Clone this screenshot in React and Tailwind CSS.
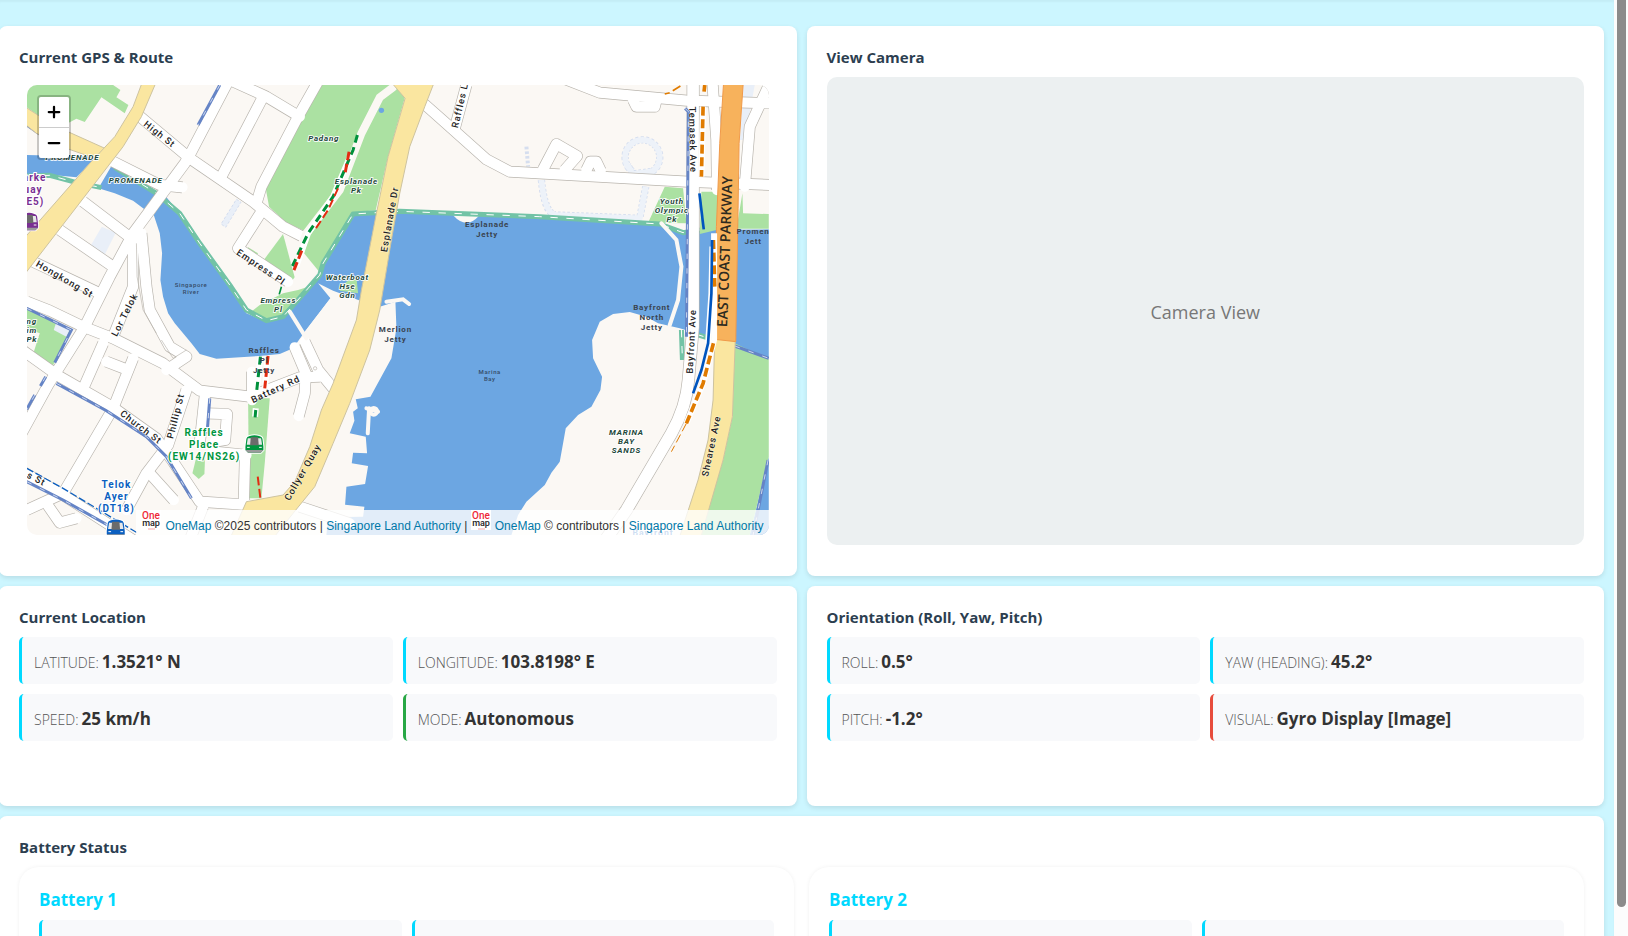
import { LuMinus, LuPlus } from 'react-icons/lu'

// Map drawing: three units to a pixel
const water = [
  'M81 465 L290 470 L230 532 L160 525 L81 528Z',
  'M335 498 L296 565 L345 580 L400 602 L437 630 L468 582 L400 540Z',
  'M497 588 L462 645 L480 700 L487 760 L482 840 L490 890 L505 940 L525 970 L575 1030 L600 1062 L650 1076 L780 1068 L840 1062 L880 1045 L915 995 L992 895 L955 850 L1000 872 L1090 905 L1140 920 L1187 905 L1190 985 L1175 1075 L1112 1190 L1068 1198 L1074 1225 L1060 1235 L1064 1262 L1050 1300 L1098 1310 L1102 1360 L1060 1358 L1056 1390 L1105 1398 L1096 1452 L1040 1460 L1036 1514 L1094 1520 L1090 1550 L985 1552 L980 1605 L1535 1605 L1555 1545 L1580 1505 L1635 1455 L1655 1418 L1680 1385 L1690 1330 L1698 1285 L1735 1245 L1775 1220 L1802 1170 L1807 1130 L1780 1075 L1777 1020 L1800 965 L1840 942 L1890 936 L1940 950 L1975 970 L2040 985 L2140 1015 L2307 1075 L2307 688 L2100 690 L2050 698 L1980 672 L1620 650 L1200 632 L1060 640 L970 790 L930 860 L880 920 L850 955 L800 965 L740 940 L700 880 L600 730 L540 640Z',
  'M2307 1370 L2307 1605 L2250 1605Z',
]

const greens = [
  'M81 255 L340 255 L362 270 L350 292 L386 315 L375 340 L305 292 L255 366 L230 356 L200 372 L178 390 L81 322Z',
  'M968 255 L1178 255 L1216 290 L1165 470 L1128 630 L1060 638 L970 790 L930 860 L880 915 L850 950 L800 962 L750 938 L780 915 L850 880 L895 870 L895 820 L930 700 L860 668 L808 620 L797 560 L820 500 L900 360Z',
  'M850 702 L792 780 L870 850 L895 820Z',
  'M745 742 L775 760 L768 768 L738 752Z',
  'M1040 845 L1070 830 L1075 880 L1020 872Z',
  'M81 925 L212 990 L160 1096 L100 1062 L120 1000 L81 985Z',
  'M745 1195 L810 1195 L795 1390 L785 1495 L748 1495Z',
  'M590 1370 L616 1370 L614 1422 L597 1437 L578 1420Z',
  'M1995 560 L2050 565 L2060 670 L1945 668Z',
  'M2105 575 L2160 575 L2150 690 L2100 702Z',
  'M2228 580 L2230 640 L2307 642 L2307 686 L2210 686Z',
  'M2205 1030 L2307 1078 L2307 1370 L2250 1605 L2100 1605 L2170 1380 L2198 1250Z',
]

const land = [
  'M895 870 L850 702 L905 750 L962 820 L925 860Z',
  'M1360 646 L1437 648 Q1400 690 1360 646Z',
  'M992 895 L1045 900 L1090 905 L1000 1150 L915 995Z',
]

const blockLines = [
  'M690 235 L575 455 L555 490 L400 700 L330 830 L255 980 L145 1155 L60 1310',
  'M415 345 L570 475 L760 605 L850 680 L905 708',
  'M785 300 L665 530',
  'M690 240 L800 290 L900 350',
  'M960 235 L895 350 L785 560 L770 610',
  'M785 635 L715 745 L865 845',
  'M340 485 L480 555 L548 562',
  'M250 605 L395 715',
  'M180 690 L340 800',
  'M81 775 L110 790 L300 880',
  'M81 905 L150 932 L250 980 L340 1015 L490 1090 L600 1172 L750 1190 L900 1132 L960 1130',
  'M400 710 L400 860 L340 1010',
  'M425 700 L440 860 L450 930 L510 1040 L560 1070 L500 1110',
  'M60 1045 L180 1130 L340 1222 L470 1315 L520 1385 L600 1505 L750 1515',
  'M310 1030 L255 1155',
  'M320 1085 L385 1110',
  'M400 1075 L340 1225 L190 1480 L81 1530',
  'M560 1170 L505 1335 L440 1420 L380 1530',
  'M60 1410 L190 1485 L400 1620',
  'M615 1190 L600 1330',
  'M620 1240 L682 1242 L676 1320 L645 1325',
  'M757 1115 L757 1200',
  'M736 1360 L732 1510',
  'M640 1355 L740 1365',
  'M450 1420 L522 1500',
  'M140 1510 L180 1568 L230 1555',
  'M915 1025 L955 1110 L1000 1165',
  'M885 1042 L918 1120 L915 1180 L897 1248',
  'M610 1520 L570 1620',
  'M900 1520 L1050 1570',
  'M1260 300 L1350 380 L1460 478 L1530 515 L2060 545 L2320 555',
  'M1400 255 L1365 385',
  'M1690 235 L1800 278 L2060 302 L2320 310',
  'M1900 300 L1910 320 L1965 320 L1970 300',
  'M1630 508 L1670 432 L1732 468 L1695 510',
  'M1760 510 L1772 485 L1790 485 L1803 512',
  'M2138 245 L2150 420 L2152 570',
  'M2310 250 L2250 380 L2235 560',
]

const smallRoads = [
  'M870 935 L920 1015',
  'M1985 670 L2030 720 L2045 800 L2035 900 L2010 975',
  'M1160 905 L1210 898 L1228 912',
  'M1100 1225 L1135 1235',
  'M1108 1225 L1104 1300',
]

const walks = [
  'M345 502 L470 580 L540 640 L600 730 L690 855 L740 930 L800 962 L850 950 L890 905 L960 825 L970 790 L1060 642 L1200 634 L1620 650 L1980 672 L2050 698 L2100 690',
  'M81 528 L150 526 L220 545 L305 563',
  'M2045 990 L2048 1080',
  'M2090 1003 L2205 1038',
]

const bluePaths = [
  'M81 375 L120 402',
  'M660 255 L595 375',
  'M81 925 L215 990 L165 1088',
  'M170 1150 L320 1232 L440 1310 L500 1370 L575 1495',
  'M105 1185 L81 1228',
  'M138 1130 L122 1158',
  'M81 1445 L190 1500 L350 1590',
  'M630 1195 L622 1300',
  'M2056 325 L2066 335 L2064 560 L2060 1010',
  'M2205 1038 L2307 1075',
  'M2305 1380 L2260 1605',
]

const stations = [
  { x: 764, y: 1330, color: '#00963f' },
  { x: 348, y: 1583, color: '#0b5fc0' },
  { x: 88, y: 663, color: '#7a2f92' },
]

const streets = [
  { text: 'High St', x: 480, y: 402, angle: 38 },
  { text: 'Empress Pl', x: 784, y: 801, angle: 34 },
  { text: 'Hongkong St', x: 195, y: 837, angle: 30 },
  { text: 'Lor Telok', x: 374, y: 944, angle: -63 },
  { text: 'Battery Rd', x: 827, y: 1167, angle: -25 },
  { text: 'Phillip St', x: 527, y: 1248, angle: -76 },
  { text: 'Church St', x: 424, y: 1281, angle: 37 },
  { text: 's St', x: 110, y: 1436, angle: 27 },
  { text: 'Collyer Quay', x: 908, y: 1416, angle: -60 },
  { text: 'Esplanade Dr', x: 1169, y: 658, angle: -80 },
  { text: 'Raffles Li', x: 1381, y: 312, angle: -77 },
  { text: 'Temasek Ave', x: 2080, y: 419, angle: 89 },
  { text: 'Bayfront Ave', x: 2074, y: 1024, angle: -87 },
  { text: 'Sheares Ave', x: 2134, y: 1338, angle: -78 },
]

const places = [
  { lines: ['PROMENADE'], x: 218, y: 479 },
  { lines: ['PROMENADE'], x: 408, y: 549 },
  { lines: ['Padang'], x: 972, y: 424 },
  { lines: ['Esplanade', 'Pk'], x: 1070, y: 552 },
  { lines: ['Waterboat', 'Hse', 'Gdn'], x: 1043, y: 840 },
  { lines: ['Empress', 'Pl'], x: 836, y: 910 },
  { lines: ['ng', 'im', 'Pk'], x: 96, y: 973 },
  { lines: ['Youth', 'Olympic', 'Pk'], x: 2016, y: 613 },
  { lines: ['MARINA', 'BAY', 'SANDS'], x: 1880, y: 1306 },
]

const jetties = [
  { lines: ['Esplanade', 'Jetty'], x: 1462, y: 680 },
  { lines: ['Bayfront', 'North', 'Jetty'], x: 1956, y: 930 },
  { lines: ['Merlion', 'Jetty'], x: 1187, y: 995 },
  { lines: ['Raffles', 'Pl', 'Jetty'], x: 793, y: 1060 },
  { lines: ['Promen', 'Jett'], x: 2260, y: 702 },
]

const stationNames = [
  { lines: ['Raffles', 'Place', '(EW14/NS26)'], x: 613, y: 1308, color: '#00963f' },
  { lines: ['Telok', 'Ayer', '(DT18)'], x: 350, y: 1463, color: '#0b5fc0' },
  { lines: ['Clarke', 'Quay', '(NE5)'], x: 88, y: 544, color: '#7a2f92' },
]

const MapLabel = ({ lines, x, y, step, color }) => (
  <text textAnchor="middle" fill={color}>
    {lines.map((line, i) => (
      <tspan key={line} x={x} y={y + i * step}>
        {line}
      </tspan>
    ))}
  </text>
)

const Train = ({ x, y, color }) => (
  <g transform={`translate(${x} ${y})`}>
    <path
      d="M-27 10 L-24 -14 Q-23 -20 -14 -22 Q0 -27 14 -22 Q23 -20 24 -14 L27 10 V20 L19 28 H-19 L-27 20Z"
      fill={color}
      stroke="#fff"
      strokeWidth="6"
      paintOrder="stroke"
    />
    <path d="M-23 4 L-20 -15 H20 L23 4Z" fill="#e8e8e8" />
    <path d="M-13 6 L-11 -18 H11 L13 6Z" fill="#6b6b6b" />
    <path d="M-22 12 H-14 M14 12 H22" stroke="#fff" strokeWidth="3" />
    <path d="M-27 20 H27 L19 28 H-19Z" fill="#9a9a9a" />
  </g>
)

const RouteMap = () => (
  <svg
    viewBox="81 255 2226 1350"
    preserveAspectRatio="xMidYMid slice"
    className="block h-full w-full font-['Roboto',sans-serif]"
    role="img"
    aria-label="Map of Marina Bay"
  >
    <rect x="0" y="200" width="2400" height="1450" fill="#fbf8f4" />
    <g fill="#6ca6e2">
      {water.map((d) => <path key={d} d={d} />)}
    </g>
    <g fill="#abe1a2">
      {greens.map((d) => <path key={d} d={d} />)}
    </g>
    <g fill="#fbf8f4">
      {land.map((d) => <path key={d} d={d} />)}
    </g>

    <g fill="#e9eff8">
      <path d="M306 680 L348 698 L314 766 L270 742Z" />
      <path d="M710 598 L724 606 L678 682 L664 672Z" strokeDasharray="8 6" stroke="#d5deef" strokeWidth="3" />
      <path d="M170 965 L212 985 L200 1010 L162 990Z" />
      <path d="M2230 255 H2265 L2235 420 H2220Z" />
    </g>
    <g fill="none" stroke="#d5deef" strokeWidth="22" strokeDasharray="8 6">
      <path d="M1898 514 A52 52 0 1 1 1958 514 L1898 522 L1884 495" />
      <path d="M1625 540 Q1635 645 1670 645 L1920 655 L1938 560" />
      <path d="M1580 440 L1585 500" strokeWidth="12" />
    </g>
    <g fill="none" stroke="#edf2f9" strokeWidth="17">
      <path d="M1898 514 A52 52 0 1 1 1958 514 L1898 522 L1884 495" />
      <path d="M1625 540 Q1635 645 1670 645 L1920 655 L1938 560" />
    </g>

    <g fill="none" stroke="#72c3a6" strokeWidth="15" strokeLinejoin="round">
      {walks.map((d) => <path key={d} d={d} />)}
    </g>
    <g fill="none" stroke="#fff" strokeWidth="3" strokeDasharray="22 26">
      {walks.map((d) => <path key={d} d={d} />)}
    </g>

    <g fill="none" stroke="#b9b5ae" strokeWidth="35" strokeLinejoin="round">
      {blockLines.map((d) => <path key={d} d={d} />)}
      <path d="M2080 240 V980 L2066 1140 Q2060 1220 2015 1300 L1880 1530 L1810 1630" strokeWidth="39" />
    </g>
    <g fill="none" stroke="#fff" strokeWidth="31" strokeLinejoin="round" strokeLinecap="round">
      {blockLines.map((d) => <path key={d} d={d} />)}
      <path d="M2080 240 V980 L2066 1140 Q2060 1220 2015 1300 L1880 1530 L1810 1630" strokeWidth="35" />
    </g>
    <g fill="none" stroke="#fbf8f4" strokeWidth="12" strokeLinecap="round">
      {smallRoads.map((d) => <path key={d} d={d} />)}
      <circle cx="1122" cy="1234" r="10" />
      <path d="M1180 262 L1140 292 L1085 400 L1020 570 L920 700 L885 790" strokeWidth="24" />
    </g>
    <g fill="none" stroke="#b9b5ae" strokeWidth="2">
      <path d="M410 730 L412 830 L430 930 L470 1000" />
      <path d="M485 1020 L520 1075 L560 1050" />
      <circle cx="946" cy="1105" r="5" />
    </g>
    <circle cx="1145" cy="331" r="8" fill="#6ca6e2" />

    <g fill="none" stroke="#6584c6" strokeWidth="9">
      {bluePaths.map((d) => <path key={d} d={d} />)}
    </g>
    <g fill="none" stroke="#fff" strokeWidth="2" strokeDasharray="16 28">
      {bluePaths.map((d) => <path key={d} d={d} />)}
    </g>
    <path d="M81 1405 L190 1465 L415 1600" fill="none" stroke="#0b5fc0" strokeWidth="4" strokeDasharray="22 8" />

    <g fill="#fae6a0" stroke="#cdc3a0" strokeWidth="3">
      <path d="M60 310 L160 375 L320 447 L300 480 L200 445 L110 400 L60 360Z" />
      <path d="M430 240 L472 240 L425 350 L370 440 L60 842 L60 730 L270 490 L345 410 L400 320Z" />
      <path d="M1160 230 L1216 295 L1165 470 L1130 640 L1085 870 L1070 960 L1000 1150 L965 1230 L930 1340 L885 1445 L850 1485 L740 1505 L680 1640 L800 1640 L880 1540 L945 1460 L1000 1330 L1050 1210 L1110 1050 L1140 930 L1175 720 L1200 580 L1230 440 L1275 320 L1310 230Z" />
      <path d="M2145 1010 L2140 1200 L2125 1320 L2095 1440 L2030 1640 L2095 1640 L2170 1380 L2198 1250 L2207 1010Z" />
    </g>
    <path
      d="M2172 240 L2231 240 L2218 430 L2215 625 L2208 1025 L2145 1018 L2150 680 L2160 430Z"
      fill="#f7b25c"
      stroke="#f09a4a"
      strokeWidth="3"
    />

    <g fill="none" strokeWidth="11">
      <g stroke="#fff" strokeWidth="18">
        <path d="M2110 320 L2105 530" />
        <path d="M2143 700 L2143 1020 L2110 1150 L2060 1270" />
        <path d="M2138 740 L2135 880 L2125 1030" />
        <path d="M1055 460 L1000 590 L925 700 L890 798" />
        <path d="M782 1070 L770 1180" />
        <path d="M803 1070 L796 1165" />
        <path d="M768 1225 L766 1250" />
      </g>
      <g stroke="#e07b00" strokeDasharray="27 11">
        <path d="M2110 320 L2105 530" />
        <path d="M2115 255 L2113 275" />
        <path d="M2141 720 L2145 860" />
        <path d="M2141 1030 L2110 1150 L2060 1270" />
        <path d="M2060 1270 L2015 1355" strokeWidth="3" />
        <path d="M2042 258 L2010 278 L1995 282" strokeWidth="5" />
      </g>
      <g stroke="#0055bf" strokeWidth="8">
        <path d="M2099 580 L2112 688" />
        <path d="M2137 720 L2135 880 L2125 1030 L2105 1110 L2080 1180" />
      </g>
      <g stroke="#00913c" strokeWidth="9" strokeDasharray="24 14">
        <path d="M1073 405 L1060 450 L1000 590 L925 700 L878 798" />
        <path d="M782 1070 L770 1180" />
        <path d="M768 1230 L766 1252" />
        <path d="M845 860 L835 895" strokeWidth="5" />
      </g>
      <g stroke="#e22c12" strokeWidth="9" strokeDasharray="26 11">
        <path d="M1048 455 L1036 520" />
        <path d="M1015 565 L985 630 L945 690" strokeWidth="6" />
        <path d="M906 752 L882 812" />
        <path d="M805 1068 L795 1165" />
        <path d="M774 1430 L782 1495" strokeWidth="6" />
      </g>
    </g>

    {stations.map((s) => <Train key={s.color} {...s} />)}

    <g className="font-medium tracking-widest" fontSize="28" fill="#222" stroke="#fff" strokeOpacity="0.5" strokeWidth="4" paintOrder="stroke">
      {streets.map((s) => (
        <text key={s.text} textAnchor="middle" transform={`translate(${s.x} ${s.y}) rotate(${s.angle})`} dy="10">
          {s.text}
        </text>
      ))}
    </g>
    <text
      className="font-['Open_Sans',sans-serif] font-semibold"
      textAnchor="middle"
      fontSize="42"
      fill="#2d2a20"
      transform="translate(2190 755) rotate(-88)"
    >
      EAST COAST PARKWAY
    </text>
    <g className="font-bold italic tracking-widest" fontSize="24" fill="#22483a" stroke="#fff" strokeWidth="5" paintOrder="stroke">
      {places.map((p, i) => <MapLabel key={i} step={27} {...p} />)}
    </g>
    <g className="font-bold tracking-widest" fontSize="24" fill="#3a4450">
      {jetties.map((p, i) => <MapLabel key={i} step={30} {...p} />)}
    </g>
    <g className="font-medium tracking-widest" fontSize="18" fill="#344a66">
      <MapLabel lines={['Singapore', 'River']} x={574} y={862} step={21} />
      <MapLabel lines={['Marina', 'Bay']} x={1470} y={1123} step={21} />
    </g>
    <g className="font-bold tracking-widest" fontSize="30" stroke="#fff" strokeWidth="6" paintOrder="stroke">
      {stationNames.map((s, i) => <MapLabel key={i} step={36} {...s} />)}
      <text x="1898" y="1608" fontSize="26" fill="#0b5fc0">Bayfront</text>
    </g>
  </svg>
)

const OneMapLogo = () => (
  <svg viewBox="0 0 20 20" className="mr-1 inline-block size-5 bg-white align-baseline font-['Roboto',sans-serif]" aria-hidden="true">
    <text x="10" y="9" textAnchor="middle" fontSize="10" fontWeight="500" fill="#ee2737">One</text>
    <text x="10" y="16" textAnchor="middle" fontSize="9" fontWeight="500" fill="#222">map</text>
    <path d="M7 19 H14" stroke="#f3a6a6" strokeWidth="1" />
  </svg>
)

const Attribution = () => (
  <div className="absolute right-0 bottom-0 h-[25px] bg-white/80 px-[5px] font-['Liberation_Sans',Arial,sans-serif] text-xs leading-5 whitespace-nowrap text-[#333]">
    <OneMapLogo />
    <a href="#onemap" className="text-[#0078a8]">OneMap</a> ©2025 contributors |{' '}
    <a href="#sla" className="text-[#0078a8]">Singapore Land Authority</a> |{' '}
    <OneMapLogo />
    <a href="#onemap" className="text-[#0078a8]">OneMap</a> © contributors |{' '}
    <a href="#sla" className="text-[#0078a8]">Singapore Land Authority</a>
  </div>
)

const ZoomControl = () => (
  <div className="absolute top-[10px] left-[10px] flex flex-col rounded border-2 border-black/20 bg-clip-padding">
    <button type="button" aria-label="Zoom in" className="flex h-[31px] w-[30px] items-center justify-center rounded-t-xs border-b border-[#ccc] bg-white text-black">
      <LuPlus className="size-[18px]" strokeWidth={3} />
    </button>
    <button type="button" aria-label="Zoom out" className="flex h-[30px] w-[30px] items-center justify-center rounded-b-xs bg-white text-black">
      <LuMinus className="size-[18px]" strokeWidth={3} />
    </button>
  </div>
)

const Card = ({ title, className = '', children }) => (
  <section className={`rounded-lg bg-white p-5 shadow-[0_2px_5px_rgba(0,0,0,0.1)] ${className}`}>
    <h3 className="mb-2 text-[15px] leading-[23px] font-bold text-[#2c3e50]">{title}</h3>
    {children}
  </section>
)

const Stat = ({ label, value, accent = 'border-[#00d9ff]' }) => (
  <div className={`flex min-h-[47px] items-baseline gap-[3px] rounded-[5px] border-l-[3px] bg-[#f8f9fb] px-3 pt-[11px] pb-2 ${accent}`}>
    {label && <span className="text-sm leading-[27px] font-light text-[#555] uppercase">{label}:</span>}
    {value && <span className="text-[17px] leading-[27px] font-bold text-[#333]">{value}</span>}
  </div>
)

const Battery = ({ name }) => (
  <div className="rounded-[20px] bg-white p-5 shadow-[0_0_4px_rgba(0,0,0,0.06)]">
    <h4 className="mb-2 text-[17px] leading-[25px] font-bold text-[#00d9ff]">{name}</h4>
    <div className="grid grid-cols-2 gap-[10px]">
      <Stat />
      <Stat />
    </div>
  </div>
)

export default function App() {
  return (
    <div className="flex h-screen overflow-hidden bg-[#ccf6ff] font-['Open_Sans','Segoe_UI',sans-serif]">
      <main className="-ml-px grid flex-1 grid-cols-2 content-start gap-[10px] pt-[26px] pr-[10px] shadow-[inset_0_2px_2px_rgba(0,0,0,0.04)]">
        <Card title="Current GPS & Route" className="min-h-[550px]">
          <div className="p-2">
            <div className="relative h-[450px] overflow-hidden rounded-[10px]">
              <RouteMap />
              <ZoomControl />
              <Attribution />
            </div>
          </div>
        </Card>

        <Card title="View Camera" className="min-h-[550px]">
          <div className="flex h-[468px] items-center justify-center rounded-[10px] bg-[#ecf0f1] pt-[2px] text-lg text-[#777]">
            Camera View
          </div>
        </Card>

        <Card title="Current Location" className="min-h-[220px]">
          <div className="grid grid-cols-2 gap-[10px]">
            <Stat label="Latitude" value="1.3521° N" />
            <Stat label="Longitude" value="103.8198° E" />
            <Stat label="Speed" value="25 km/h" />
            <Stat label="Mode" value="Autonomous" accent="border-[#28a745]" />
          </div>
        </Card>

        <Card title="Orientation (Roll, Yaw, Pitch)" className="min-h-[220px]">
          <div className="grid grid-cols-2 gap-[10px]">
            <Stat label="Roll" value="0.5°" />
            <Stat label="Yaw (Heading)" value="45.2°" />
            <Stat label="Pitch" value="-1.2°" />
            <Stat label="Visual" value="Gyro Display [Image]" accent="border-[#e74c3c]" />
          </div>
        </Card>

        <Card title="Battery Status" className="col-span-2">
          <div className="grid grid-cols-2 gap-[15px]">
            <Battery name="Battery 1" />
            <Battery name="Battery 2" />
          </div>
        </Card>
      </main>

      <div className="w-[14px] bg-[#fcfcfc] px-[3px] pb-[29px]" aria-hidden="true">
        <div className="h-full w-[9px] rounded-b-full bg-[#8b8b8b]" />
      </div>
    </div>
  )
}
